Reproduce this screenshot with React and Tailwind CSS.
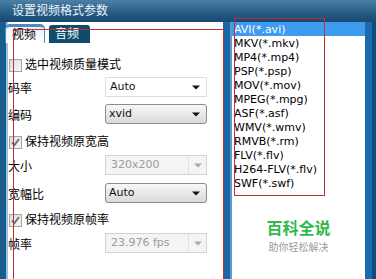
import React from "react";

const Arrow = ({ color = "#111" }) => (
  <svg width="8" height="5" viewBox="0 0 8 5" className="shrink-0">
    <path d="M0 0.5 H8 L4 4.5 Z" fill={color} />
  </svg>
);

const CheckBox = ({ checked }) => (
  <div className="w-[13px] h-[13px] border border-[#a3a3a3] bg-gradient-to-br from-[#dedede] to-[#f7f7f7] flex items-center justify-center shrink-0">
    {checked && (
      <svg width="11" height="11" viewBox="0 0 11 11">
        <path d="M2 5.5 L4.3 8.2 L9 2" stroke="#6b6b6b" strokeWidth="1.8" fill="none" />
      </svg>
    )}
  </div>
);

const FlatSelect = ({ value }) => (
  <div className="w-[102px] h-[20px] border border-[#dedede] bg-white flex items-center justify-between pl-[4px] pr-[6px] text-[11px] text-[#111]">
    <span>{value}</span>
    <Arrow />
  </div>
);

const GradSelect = ({ value }) => (
  <div className="w-[102px] h-[20px] border border-[#8c8c8c] rounded-[3px] bg-gradient-to-b from-[#f8f8f8] to-[#d9d9d9] flex items-center justify-between pl-[3px] pr-[6px] text-[11px] text-[#111]">
    <span>{value}</span>
    <Arrow />
  </div>
);

const DisabledSelect = ({ value }) => (
  <div className="w-[102px] h-[20px] border border-[#d2d2d2] bg-[#f4f4f4] flex text-[11px] text-[#9b9b9b]">
    <div className="flex-1 flex items-center pl-[5px] border-r border-[#e2e2e2]">{value}</div>
    <div className="w-[17px] flex items-center justify-center">
      <Arrow color="#aaaaaa" />
    </div>
  </div>
);

const Row = ({ label, children, className }) => (
  <div className={"flex items-center h-[20px] " + className}>
    <span className="w-[97px] text-[12px] text-black pt-[3px]">{label}</span>
    {children}
  </div>
);

const CheckRow = ({ label, checked, className }) => (
  <div className={"flex items-center h-[16px] ml-[1px] gap-[3px] " + className}>
    <CheckBox checked={checked} />
    <span className="text-[12px] text-black">{label}</span>
  </div>
);

const formats = [
  "AVI(*.avi)",
  "MKV(*.mkv)",
  "MP4(*.mp4)",
  "PSP(*.psp)",
  "MOV(*.mov)",
  "MPEG(*.mpg)",
  "ASF(*.asf)",
  "WMV(*.wmv)",
  "RMVB(*.rm)",
  "FLV(*.flv)",
  "H264-FLV(*.flv)",
  "SWF(*.swf)",
];

export default function App() {
  return (
    <div
      className="relative w-[376px] h-[279px] overflow-hidden flex flex-col bg-[#1a67a3]"
      style={{ fontFamily: "'DejaVu Sans','Noto Sans CJK SC',sans-serif" }}
    >
      <div className="h-[22px] shrink-0 bg-gradient-to-b from-[#4c80a6] via-[#2b618a] to-[#174870] flex items-center pl-[12px] text-[12px] text-[#eef3f8]">
        设置视频格式参数
      </div>
      <div className="flex flex-1 min-h-0">
        <div className="w-[6px] bg-[#185d8e]" />
        <div className="w-[2px] bg-[#9cc3de]" />
        <div className="w-[215px] bg-white flex flex-col">
          <div className="h-[21px] flex items-end gap-[4px] -ml-[3px]">
            <div className="h-[19px] w-[40px] rounded-t-[5px] border-t-[3px] border-x border-[#4a8cc0] bg-gradient-to-b from-[#eaf3fa] to-white text-[12px] text-black pl-[6px] flex items-center">
              视频
            </div>
            <div className="h-[18px] w-[41px] rounded-t-[3px] bg-[#0f4c6b] text-[12px] text-white pl-[6px] flex items-center">
              音频
            </div>
          </div>
          <CheckRow label="选中视频质量模式" className="mt-[14px]" />
          <Row label="码率" className="mt-[4px]">
            <FlatSelect value="Auto" />
          </Row>
          <Row label="编码" className="mt-[7px]">
            <GradSelect value="xvid" />
          </Row>
          <CheckRow label="保持视频原宽高" checked className="mt-[10px]" />
          <Row label="大小" className="mt-[5px]">
            <DisabledSelect value="320x200" />
          </Row>
          <Row label="宽幅比" className="mt-[8px]">
            <GradSelect value="Auto" />
          </Row>
          <CheckRow label="保持视频原帧率" checked className="mt-[9px]" />
          <Row label="帧率" className="mt-[5px]">
            <DisabledSelect value="23.976 fps" />
          </Row>
        </div>
        <div className="w-[9px] bg-[#1a67a6] border-r-2 border-[#5c9ccc]" />
        <div className="w-[133px] bg-white flex flex-col">
          {formats.map((f, i) => (
            <div
              key={f}
              className={
                "h-[14px] flex items-center pl-[2px] text-[11px] leading-none " +
                (i === 0 ? "bg-[#3d9bf0] text-white" : "text-black")
              }
            >
              {f}
            </div>
          ))}
          <div className="mt-[27px] flex flex-col items-center">
            <div className="h-[20px] flex items-center text-[16px] font-bold text-[#30b94b] leading-none" style={{ fontFamily: "'Noto Sans CJK SC',sans-serif" }}>
              百科全说
            </div>
            <div className="h-[12px] mt-[4px] flex items-center text-[10px] text-[#9a9a9a] leading-none" style={{ fontFamily: "'Noto Sans CJK SC',sans-serif" }}>
              助你轻松解决
            </div>
          </div>
        </div>
        <div className="w-[7px] bg-[#1b6aab]" />
        <div className="w-[4px] bg-[#0f4d7e]" />
      </div>
      <div className="absolute left-[13px] top-[29px] w-[211px] h-[260px] border border-b-0 border-[#bf2f34]" />
      <div className="absolute left-[234px] top-[18px] w-[91px] h-[178px] border border-[#bf2f34]" />
    </div>
  );
}
